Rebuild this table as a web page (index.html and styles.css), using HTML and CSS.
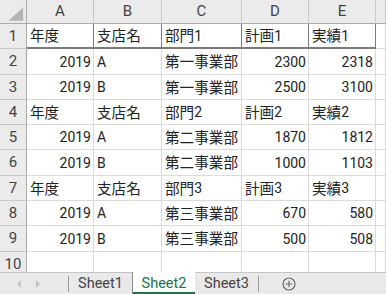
FILE: index.html
```html
<!DOCTYPE html>
<html lang="ja">
<head>
<meta charset="utf-8">
<link rel="stylesheet" href="styles.css">
</head>
<body>
<div class="sheet">
  <div class="c h corner"><svg width="27" height="24" viewBox="0 0 27 24"><polygon points="24,7 24,21 9,21" fill="#b5b5b5"/></svg></div>
  <div class="c h">A</div><div class="c h">B</div><div class="c h">C</div><div class="c h">D</div><div class="c h">E</div><div class="c h"></div>

  <div class="c rh">1</div>
  <div class="c t"><span class="j">年度</span></div>
  <div class="c t"><span class="j">支店名</span></div>
  <div class="c t"><span class="j">部門</span>1</div>
  <div class="c t"><span class="j">計画</span>1</div>
  <div class="c t"><span class="j">実績</span>1</div>
  <div class="c"></div>

  <div class="c rh">2</div>
  <div class="c n">2019</div><div class="c">A</div><div class="c"><span class="j">第一事業部</span></div><div class="c n">2300</div><div class="c n">2318</div><div class="c"></div>
  <div class="c rh">3</div>
  <div class="c n">2019</div><div class="c">B</div><div class="c"><span class="j">第一事業部</span></div><div class="c n">2500</div><div class="c n">3100</div><div class="c"></div>

  <div class="c rh">4</div>
  <div class="c"><span class="j">年度</span></div><div class="c"><span class="j">支店名</span></div><div class="c"><span class="j">部門</span>2</div><div class="c"><span class="j">計画</span>2</div><div class="c"><span class="j">実績</span>2</div><div class="c"></div>
  <div class="c rh">5</div>
  <div class="c n">2019</div><div class="c">A</div><div class="c"><span class="j">第二事業部</span></div><div class="c n">1870</div><div class="c n">1812</div><div class="c"></div>
  <div class="c rh">6</div>
  <div class="c n">2019</div><div class="c">B</div><div class="c"><span class="j">第二事業部</span></div><div class="c n">1000</div><div class="c n">1103</div><div class="c"></div>

  <div class="c rh">7</div>
  <div class="c"><span class="j">年度</span></div><div class="c"><span class="j">支店名</span></div><div class="c"><span class="j">部門</span>3</div><div class="c"><span class="j">計画</span>3</div><div class="c"><span class="j">実績</span>3</div><div class="c"></div>
  <div class="c rh">8</div>
  <div class="c n">2019</div><div class="c">A</div><div class="c"><span class="j">第三事業部</span></div><div class="c n">670</div><div class="c n">580</div><div class="c"></div>
  <div class="c rh">9</div>
  <div class="c n">2019</div><div class="c">B</div><div class="c"><span class="j">第三事業部</span></div><div class="c n">500</div><div class="c n">508</div><div class="c"></div>

  <div class="c rh">10</div>
  <div class="c"></div><div class="c"></div><div class="c"></div><div class="c"></div><div class="c"></div><div class="c"></div>
</div>
<div class="tabs">
  <div class="nav">
    <svg width="6" height="8" viewBox="0 0 6 8"><polygon points="5,0 5,8 1,4" fill="#c4c4c4"/></svg>
    <svg width="6" height="8" viewBox="0 0 6 8"><polygon points="1,0 1,8 5,4" fill="#c4c4c4"/></svg>
  </div>
  <div class="sep"></div>
  <div class="tab">Sheet1</div>
  <div class="tab active">Sheet2</div>
  <div class="tab">Sheet3</div>
  <div class="sep"></div>
  <div class="add"><svg width="14" height="14" viewBox="0 0 14 14"><circle cx="7" cy="7" r="6" fill="none" stroke="#6a6a6a" stroke-width="1.2"/><path d="M7 3.8V10.2M3.8 7H10.2" stroke="#6a6a6a" stroke-width="1.2"/></svg></div>
</div>
</body>
</html>
```
FILE: styles.css
```css
html, body {
  margin: 0;
  padding: 0;
}
body {
  width: 386px;
  height: 294px;
  overflow: hidden;
  background: #fff;
  font-family: Roboto, "Noto Sans CJK JP", sans-serif;
}
.sheet {
  display: grid;
  grid-template-columns: 27px 67px 68px 80px 67px 67px 10px;
  grid-template-rows: 24px 25px 26px 25px 25px 25px 26px 25px 25px 26px 26px;
  height: 272px;
  overflow: hidden;
}
.c {
  box-sizing: border-box;
  border-right: 1px solid #dadada;
  border-bottom: 1px solid #dadada;
  display: flex;
  align-items: center;
  padding: 0 3px;
  font-size: 14px;
  line-height: 1;
  color: #222;
  white-space: nowrap;
  overflow: hidden;
}
.j {
  font-family: "Noto Sans CJK JP", sans-serif;
  font-size: 14.6px;
  line-height: 1;
}
.n {
  justify-content: flex-end;
  padding-right: 2px;
}
.h, .rh {
  background: #ebebeb;
  justify-content: center;
  color: #444;
  font-size: 15px;
  padding: 0;
}
.h {
  border-right: 1px solid #c8c8c8;
  border-bottom: 1px solid #a9a9a9;
}
.rh {
  border-right: 1px solid #a9a9a9;
  border-bottom: 1px solid #c8c8c8;
}
.corner {
  border-right: 1px solid #a9a9a9;
}
.corner svg {
  display: block;
}
.t {
  border-right: 1px solid #7a7a7a;
  border-bottom: 2px solid #7a7a7a;
}
.tabs {
  display: flex;
  align-items: stretch;
  height: 22px;
  box-sizing: border-box;
  background: #e9e9e9;
  border-top: 1px solid #c4c4c4;
  font-family: Roboto, sans-serif;
}
.nav {
  width: 68px;
  display: flex;
  align-items: center;
  gap: 13px;
  padding-left: 16px;
  box-sizing: border-box;
}
.sep {
  width: 1px;
  background: #9a9a9a;
  margin: 3px 0 2px;
}
.tab {
  width: 63px;
  display: flex;
  align-items: center;
  justify-content: center;
  font-size: 14.5px;
  color: #444;
}
.tab.active {
  background: #fff;
  color: #217346;
  margin-top: -1px;
  border-left: 1px solid #8a8a8a;
  box-shadow: inset 0 -2px 0 #217346;
  box-sizing: border-box;
}
.add {
  width: 60px;
  display: flex;
  align-items: center;
  justify-content: center;
}
```
